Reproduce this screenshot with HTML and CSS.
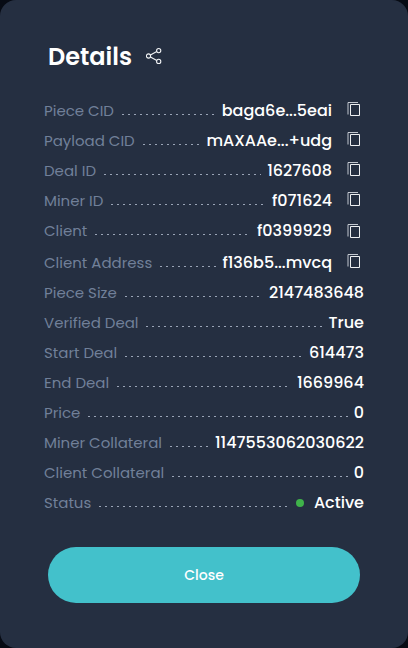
FILE: index.html
```html
<!DOCTYPE html>
<html lang="en">
<head>
<meta charset="utf-8">
<title>Details</title>
<link rel="stylesheet" href="styles.css">
</head>
<body>
<svg class="defs" aria-hidden="true">
  <symbol id="copy" viewBox="0 0 14 15">
    <path d="M1 12.5V.5H11" fill="none" stroke="#c3c8d0"/>
    <path d="M3.5 2.5h9v11h-9z" fill="none" stroke="#eef0f2"/>
  </symbol>
</svg>
<main class="card">
  <header class="head">
    <h1>Details</h1>
    <svg class="share" viewBox="0 0 17 18" fill="none" stroke="#f2f4f6" stroke-width="1.1">
      <circle cx="2.5" cy="9" r="2.1"/><circle cx="12.7" cy="3.6" r="2.1"/><circle cx="12.7" cy="14.4" r="2.1"/>
      <path d="M4.4 8L10.8 4.6M4.4 10l6.4 3.4"/>
    </svg>
  </header>
  <div class="list">
    <div class="row piece-cid"><span class="label">Piece CID</span><i class="dots"></i><span class="value">baga6e...5eai</span><svg class="copy"><use href="#copy"/></svg></div>
    <div class="row payload-cid"><span class="label">Payload CID</span><i class="dots"></i><span class="value">mAXAAe...+udg</span><svg class="copy"><use href="#copy"/></svg></div>
    <div class="row deal-id"><span class="label">Deal ID</span><i class="dots"></i><span class="value">1627608</span><svg class="copy"><use href="#copy"/></svg></div>
    <div class="row miner-id"><span class="label">Miner ID</span><i class="dots"></i><span class="value">f071624</span><svg class="copy"><use href="#copy"/></svg></div>
    <div class="row client"><span class="label">Client</span><i class="dots"></i><span class="value">f0399929</span><svg class="copy"><use href="#copy"/></svg></div>
    <div class="row client-address"><span class="label">Client Address</span><i class="dots"></i><span class="value">f136b5...mvcq</span><svg class="copy"><use href="#copy"/></svg></div>
    <div class="row piece-size"><span class="label">Piece Size</span><i class="dots"></i><span class="value">2147483648</span></div>
    <div class="row verified"><span class="label">Verified Deal</span><i class="dots"></i><span class="value">True</span></div>
    <div class="row start-deal"><span class="label">Start Deal</span><i class="dots"></i><span class="value">614473</span></div>
    <div class="row end-deal"><span class="label">End Deal</span><i class="dots"></i><span class="value">1669964</span></div>
    <div class="row price"><span class="label">Price</span><i class="dots"></i><span class="value">0</span></div>
    <div class="row miner-collateral"><span class="label">Miner Collateral</span><i class="dots"></i><span class="value">1147553062030622</span></div>
    <div class="row client-collateral"><span class="label">Client Collateral</span><i class="dots"></i><span class="value">0</span></div>
    <div class="row status"><span class="label">Status</span><i class="dots"></i><span class="value"><i class="bullet"></i>Active</span></div>
  </div>
  <button class="close">Close</button>
</main>
</body>
</html>
```
FILE: styles.css
```css
* { box-sizing: border-box; }
html, body { height: 648px; overflow: hidden; }
body {
  margin: 0;
  background: linear-gradient(90deg, #070b14 12px, #241c38 24px, #241c38 384px, #070b14 396px);
  font-family: Poppins, Inter, sans-serif;
}
.defs { position: absolute; width: 0; height: 0; }
.card {
  height: 647.5px;
  padding: 39px 44px 0;
  border-radius: 16px;
  background: #252f41;
}
.head { display: flex; align-items: center; height: 36px; padding-left: 4px; }
h1 {
  width: 98px;
  margin: 0;
  font-size: 24px;
  line-height: 36px;
  font-weight: 600;
  color: #fff;
}
.share { width: 17px; height: 18px; margin-top: -2px; }
.list { margin-top: 21px; }
.row { display: flex; align-items: center; height: 30px; line-height: 30px; white-space: nowrap; }
.label { flex: none; width: var(--label); font-size: 15px; color: #718099; }
.dots {
  flex: none;
  width: var(--dots);
  height: 1px;
  margin-top: 7px;
  background: repeating-linear-gradient(90deg, #9aa4b6 0 2px, transparent 2px 6px);
}
.value {
  display: flex;
  align-items: center;
  margin-left: auto;
  font-size: 16px;
  font-weight: 500;
  color: #fff;
}
.copy { flex: none; width: 14px; height: 15px; margin: -3px 3px 0 15px; }
.bullet { width: 8px; height: 8px; margin-right: 10px; border-radius: 50%; background: #3fb34a; }

.piece-cid { --label: 78px; --dots: 93px; }
.payload-cid { --label: 99px; --dots: 56px; }
.deal-id { --label: 60px; --dots: 157px; }
.miner-id { --label: 67px; --dots: 152px; }
.client { --label: 51px; --dots: 152px; }
.client-address { --label: 116px; --dots: 56px; margin-top: 2px; }
.piece-size { --label: 81px; --dots: 134px; }
.verified { --label: 102px; --dots: 177px; }
.start-deal { --label: 81px; --dots: 176px; }
.end-deal { --label: 73px; --dots: 170px; }
.price { --label: 44px; --dots: 260px; }
.miner-collateral { --label: 126px; --dots: 38px; }
.client-collateral { --label: 128px; --dots: 176px; }
.status { --label: 55px; --dots: 188px; }
.client .copy { margin-top: 1px; }

.close {
  display: block;
  width: 312px;
  height: 56px;
  margin: 29px 0 0 4px;
  padding: 0;
  border: 0;
  border-radius: 28px;
  background: #43c1cb;
  font: 500 14px/56px Poppins, Inter, sans-serif;
  color: #fff;
}
```
